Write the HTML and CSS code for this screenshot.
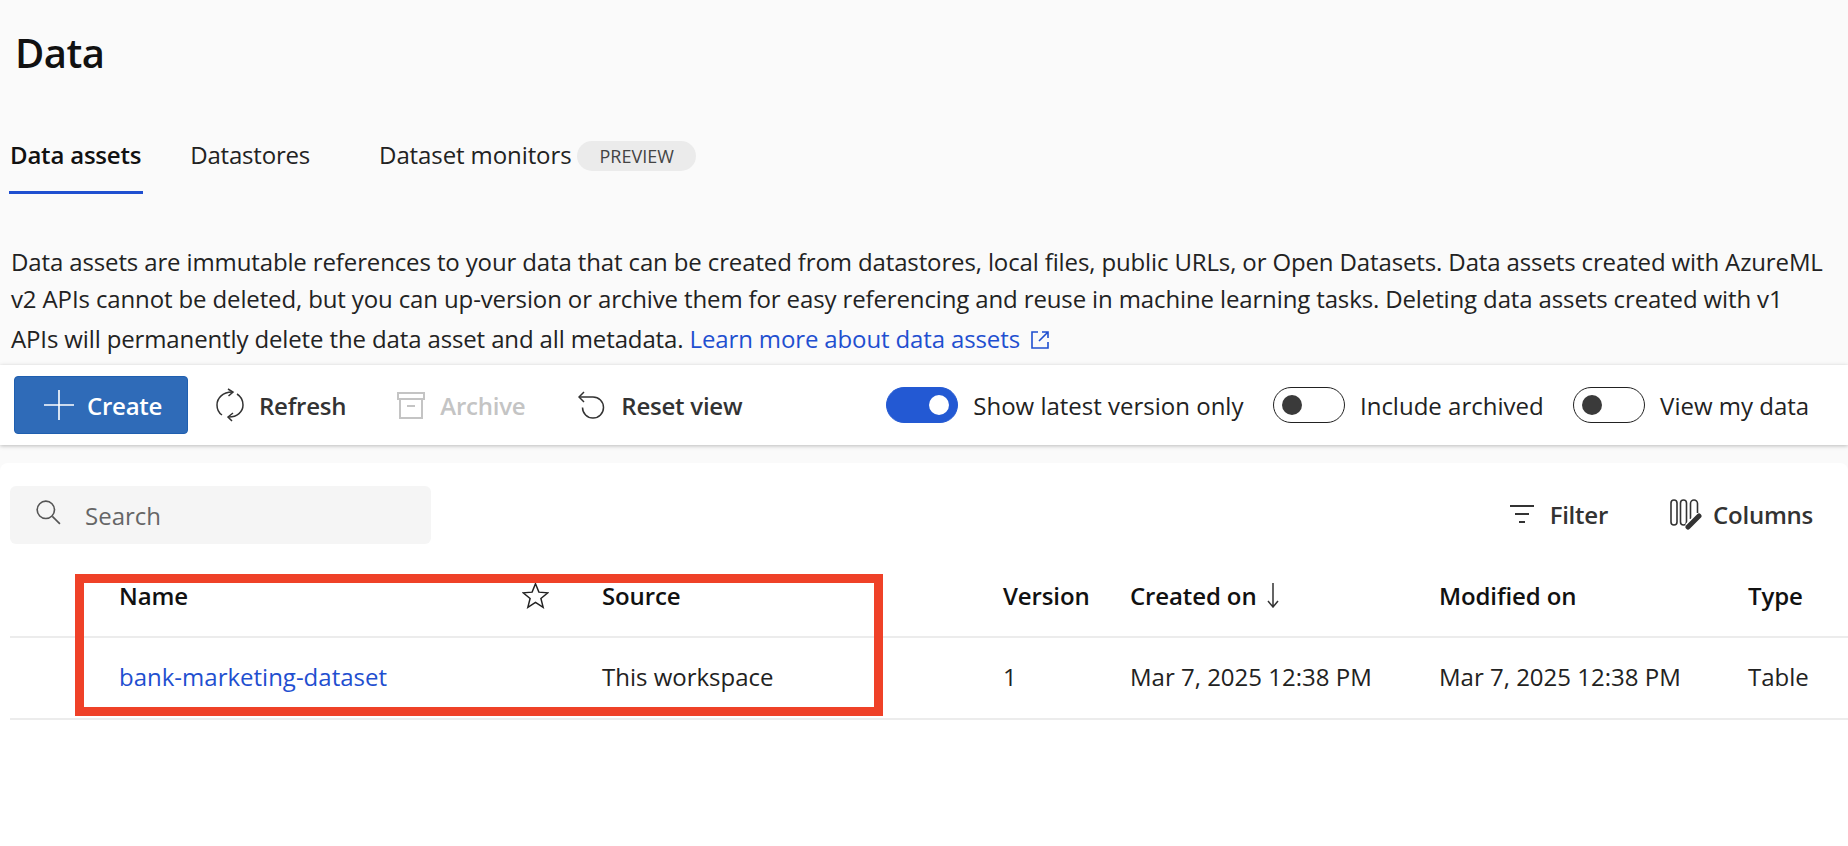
FILE: index.html
```html
<!DOCTYPE html>
<html lang="en">
<head>
    <meta charset="UTF-8">
    <meta name="viewport" content="width=device-width, initial-scale=1.0">
    <title>Data</title>
    <link rel="stylesheet" href="styles.css">
</head>
<body>
    <header class="page-head">
        <h1>Data</h1>
        <nav class="tabs">
            <a class="tab active">Data assets</a>
            <a class="tab tab-stores">Datastores</a>
            <a class="tab tab-monitors">Dataset monitors</a>
            <span class="pill">PREVIEW</span>
        </nav>
        <p class="intro">Data assets are immutable references to your data that can be created from datastores, local files, public URLs, or Open Datasets. Data assets created with AzureML v2 APIs cannot be deleted, but you can up-version or archive them for easy referencing and reuse in machine learning tasks. Deleting data assets created with v1 APIs will permanently delete the data asset and all metadata. <a class="link">Learn more about data assets <svg class="ext" viewBox="0 0 20 20" fill="none" stroke="currentColor" stroke-width="1.6"><path d="M8 2H2v16h16v-6"/><path d="M12 2h6v6M18 2L9 11"/></svg></a></p>
    </header>

    <section class="toolbar">
        <button class="create"><svg class="icon-plus" viewBox="0 0 32 32" stroke="#fff" stroke-width="1.6"><path d="M16 1v30M1 16h30"/></svg>Create</button>
        <button class="tool tool-refresh"><svg class="icon" viewBox="0 0 28 34" fill="none" stroke="#333" stroke-width="1.5"><path d="M16 4C7 4 1 10 1 17c0 4 2 8 5 10"/><path d="M21 6c4 2.500 6 6.500 6 11 0 7-6 12-14 12"/><path d="M12 1l5 3-4.500 4"/><path d="M17 25l-5 4 4 4"/></svg>Refresh</button>
        <button class="tool tool-archive disabled"><svg class="icon" viewBox="0 0 28 28" fill="none" stroke="#c4c4c4" stroke-width="2"><path d="M1 2h26v6H1zM3 8v19h22V8M10 15h8"/></svg>Archive</button>
        <button class="tool tool-reset"><svg class="icon" viewBox="0 0 28 28" fill="none" stroke="#333" stroke-width="1.500"><path d="M1 6h14a10.500 10.500 0 1 1-10.500 10.500"/><path d="M6 1L1 6l5 5"/></svg>Reset view</button>
        <div class="toggles">
            <label class="toggle-item"><span class="toggle on"></span>Show latest version only</label>
            <label class="toggle-item"><span class="toggle"></span>Include archived</label>
            <label class="toggle-item"><span class="toggle"></span>View my data</label>
        </div>
    </section>

    <section class="card">
        <div class="card-top">
            <div class="search"><svg class="search-icon" viewBox="0 0 24 24" fill="none" stroke="#555" stroke-width="1.5"><circle cx="10" cy="10" r="8"/><path d="M16 16l7 7"/></svg>Search</div>
            <div class="card-actions">
                <span class="action"><svg class="icon-filter" viewBox="0 0 26 20" stroke="#333" stroke-width="2"><path d="M1 2h24M6 10h14M10 18h6"/></svg>Filter</span>
                <span class="action"><svg class="icon-columns" viewBox="0 0 32 31" fill="none" stroke="#333" stroke-width="1.600"><rect x="1" y="1" width="6" height="25" rx="3"/><rect x="10.500" y="1" width="6" height="25" rx="3"/><path d="M20.500 20V4.500a3.500 3.500 0 0 1 7 0V14"/><path d="M29 17L18 28" stroke="#fff" stroke-width="8"/><path d="M29 17L18 28" stroke-width="5" stroke-linecap="round"/></svg>Columns</span>
            </div>
        </div>
        <div class="table-wrap">
            <div class="row head">
                <div class="cell name-head">Name<svg class="star" viewBox="0 0 24 24" fill="none" stroke="#222" stroke-width="1.300"><path d="M12 1.500l3 7.500 8 .6-6.200 5.100 2 7.800-6.800-4.300-6.800 4.300 2-7.800L1 9.600 9 9z"/></svg></div>
                <div class="cell">Source</div>
                <div class="cell">Version</div>
                <div class="cell created">Created on<svg class="arrow" viewBox="0 0 12 26" fill="none" stroke="#333" stroke-width="1.500"><path d="M6 1v24M1 19l5 6 5-6"/></svg></div>
                <div class="cell">Modified on</div>
                <div class="cell">Type</div>
            </div>
            <div class="row">
                <div class="cell"><a class="link">bank-marketing-dataset</a></div>
                <div class="cell">This workspace</div>
                <div class="cell">1</div>
                <div class="cell">Mar 7, 2025 12:38 PM</div>
                <div class="cell">Mar 7, 2025 12:38 PM</div>
                <div class="cell">Table</div>
            </div>
            <div class="highlight"></div>
        </div>
    </section>
</body>
</html>
```

FILE: styles.css
```css
* {
    box-sizing: border-box;
}
html, body {
    height: 100%;
}
body {
    margin: 0;
    font-family: 'Open Sans', 'Noto Sans', sans-serif;
    font-size: 24px;
    color: #222;
    background-color: #fafafa;
    overflow: hidden;
}
.page-head {
    height: 365px;
    padding: 25px 10px 0;
}
h1 {
    margin: 0 0 0 5px;
    font-size: 40px;
    line-height: 56px;
    font-weight: 600;
    letter-spacing: -0.5px;
    color: #111;
}
.tabs {
    display: flex;
    align-items: center;
    height: 60px;
    margin-top: 43px;
    letter-spacing: -0.2px;
}
.tab {
    color: #222;
    white-space: nowrap;
}
.tab.active {
    font-weight: 600;
    color: #111;
    position: relative;
}
.tab.active::after {
    content: "";
    position: absolute;
    left: -1px;
    right: -2px;
    bottom: -23px;
    height: 3px;
    background-color: #1f4fd0;
}
.tab-stores {
    margin-left: 49px;
}
.tab-monitors {
    margin-left: 69px;
    letter-spacing: -0.1px;
}
.pill {
    margin: 4px 0 0 6px;
    padding: 0 22px;
    height: 30px;
    line-height: 30px;
    border-radius: 15px;
    background-color: #ebebeb;
    color: #444;
    font-size: 18px;
    letter-spacing: 0;
}
.intro {
    margin: 59px 0 0 1px;
    padding-right: 15px;
    line-height: 37px;
    letter-spacing: -0.13px;
}
.link {
    color: #1f4fd0;
}
.ext {
    width: 20px;
    height: 20px;
    margin: 13px 0 0 4px;
    vertical-align: -2px;
}
.toolbar {
    display: flex;
    align-items: center;
    height: 80px;
    padding-left: 14px;
    background-color: #fff;
    box-shadow: 0 1px 4px rgba(0, 0, 0, 0.25);
    position: relative;
}
button {
    display: flex;
    align-items: center;
    border: none;
    background: none;
    padding: 0;
    font: inherit;
    font-weight: 600;
    letter-spacing: -0.24px;
    color: #333;
    white-space: nowrap;
}
.create {
    width: 174px;
    height: 58px;
    padding-left: 28px;
    border-radius: 4px;
    background-color: #2f6bb8;
    border: 1px solid #1f5fb0;
    color: #fff;
}
.icon-plus {
    width: 32px;
    height: 32px;
    margin-right: 12px;
}
.icon {
    width: 28px;
    height: 34px;
    margin-right: 15px;
}
.tool-refresh {
    margin-left: 28px;
}
.tool-archive {
    margin-left: 51px;
}
.tool-reset {
    margin-left: 53px;
}
.disabled {
    color: #c4c4c4;
}
.toggles {
    display: flex;
    align-items: center;
    margin-left: 144px;
}
.toggle-item {
    display: flex;
    align-items: center;
    margin-right: 29.500px;
    white-space: nowrap;
}
.toggle {
    width: 72px;
    height: 36px;
    margin-right: 15px;
    border: 1.500px solid #222;
    border-radius: 18px;
    background-color: #fff;
    display: flex;
    align-items: center;
    padding: 0 8px;
}
.toggle::before {
    content: "";
    width: 20px;
    height: 20px;
    border-radius: 50%;
    background-color: #3a3a3a;
}
.toggle.on {
    background-color: #2359d3;
    border-color: #2359d3;
    justify-content: flex-end;
}
.toggle.on::before {
    background-color: #fff;
}
.card {
    margin-top: 18px;
    height: 400px;
    padding-left: 10px;
    background-color: #fff;
    border-radius: 8px 8px 0 0;
}
.card-top {
    display: flex;
    align-items: flex-start;
    justify-content: space-between;
    padding-top: 23px;
    height: 83px;
}
.search {
    display: flex;
    align-items: center;
    width: 421px;
    height: 58px;
    padding-left: 25px;
    border-radius: 6px;
    background-color: #f5f5f5;
    color: #666;
}
.search-icon {
    width: 26px;
    height: 26px;
    margin-right: 24px;
    margin-top: -6px;
}
.card-actions {
    display: flex;
    align-items: center;
    height: 56px;
    padding-right: 35px;
}
.action {
    display: flex;
    align-items: center;
    font-weight: 600;
    letter-spacing: -0.24px;
    color: #333;
    margin-left: 62px;
}
.icon-filter {
    width: 26px;
    height: 20px;
    margin-right: 15px;
}
.icon-columns {
    width: 32px;
    height: 31px;
    margin-right: 11px;
}
.table-wrap {
    position: relative;
}
.row {
    display: grid;
    grid-template-columns: 483px 401px 127px 309px 309px 1fr;
    align-items: center;
    padding-left: 109px;
    padding-bottom: 4px;
    height: 82px;
    border-bottom: 2px solid #ececec;
}
.row.head {
    height: 92px;
    padding-top: 8px;
    padding-bottom: 0;
    font-weight: 600;
    letter-spacing: -0.12px;
    color: #111;
}
.name-head {
    position: relative;
}
.star {
    position: absolute;
    left: 403px;
    top: 3px;
    width: 27px;
    height: 27px;
}
.created {
    display: flex;
    align-items: center;
}
.arrow {
    width: 12px;
    height: 26px;
    margin-left: 10px;
}
.highlight {
    position: absolute;
    left: 65px;
    top: 28px;
    width: 808px;
    height: 142px;
    border: 9px solid #ef4128;
    pointer-events: none;
}
```
